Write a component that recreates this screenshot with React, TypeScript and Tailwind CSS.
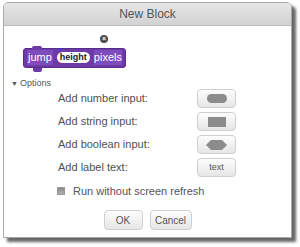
import React from "react";

const font = { fontFamily: '"Liberation Sans", Arial, sans-serif' };

function SmallBtn({ children }: { children: React.ReactNode }) {
  return (
    <div className="w-[39px] h-[19px] rounded-[4px] border border-[#cfcfcf] bg-gradient-to-b from-[#fdfdfd] to-[#e6e6e6] flex items-center justify-center">
      {children}
    </div>
  );
}

function Row({ label, children }: { label: string; children: React.ReactNode }) {
  return (
    <div className="flex items-center h-[19px]">
      <div className="w-[193px] pl-[54px] text-[11px] text-[#505050] leading-none whitespace-nowrap">{label}</div>
      {children}
    </div>
  );
}

export default function App() {
  return (
    <div className="w-[300px] h-[247px] bg-white pt-[2px] pl-[3px]" style={font}>
      <div className="w-[289px] h-[236px] bg-white border border-[#a8a8a8] rounded-t-[5px] shadow-[4px_4px_3px_rgba(0,0,0,0.6)] flex flex-col">
        <div className="h-[23px] rounded-t-[4px] bg-gradient-to-b from-[#e6e6e6] to-[#d2d2d2] border-b border-[#bdbdbd] text-center text-[12px] leading-[22px] text-[#555]">
          New Block
        </div>
        <div className="pl-[19px] pt-[18px] h-[44px]">
          <div className="relative inline-flex items-center h-[20px] bg-[#6d3aa8] rounded-[3px] pl-[3px] pr-[3px] gap-[4px] border border-[#5a2d8c]">
            <div className="absolute left-[8px] top-[-3px] w-[10px] h-[3px] bg-[#6d3aa8] rounded-t-[2px]" />
            <div className="absolute left-[9px] bottom-[-5px] w-[9px] h-[4px] bg-[#6d3aa8] rounded-b-[2px]" />
            <div className="absolute left-[76px] top-[-14px] w-[8px] h-[8px] rounded-full bg-[#4a4a4a] flex items-center justify-center text-white text-[7px] leading-none font-bold">×</div>
            <div className="h-[15px] px-[1px] bg-[#7d4dbd] text-white text-[11px] leading-[15px]">jump</div>
            <div className="h-[11px] px-[3px] rounded-full bg-white text-[#222] text-[9px] font-bold leading-[11px]">height</div>
            <div className="h-[15px] bg-[#7d4dbd] text-white text-[11px] leading-[15px]">pixels</div>
          </div>
        </div>
        <div className="pl-[7px] pt-[13px] flex items-center text-[9px] text-[#555] leading-none h-[9px]">
          <span className="text-[7px] mr-[2px]">▼</span>Options
        </div>
        <div className="mt-[6px] flex flex-col gap-[4px]">
          <Row label="Add number input:">
            <SmallBtn><div className="w-[20px] h-[9px] rounded-full bg-[#8c8c8c]" /></SmallBtn>
          </Row>
          <Row label="Add string input:">
            <SmallBtn><div className="w-[18px] h-[10px] bg-[#8c8c8c]" /></SmallBtn>
          </Row>
          <Row label="Add boolean input:">
            <SmallBtn>
              <svg width="21" height="10" viewBox="0 0 21 10"><polygon points="0,5 5,0 16,0 21,5 16,10 5,10" fill="#8c8c8c" /></svg>
            </SmallBtn>
          </Row>
          <Row label="Add label text:">
            <SmallBtn><span className="text-[9px] text-[#555]">text</span></SmallBtn>
          </Row>
        </div>
        <div className="mt-[9px] pl-[53px] flex items-center h-[10px]">
          <div className="w-[8px] h-[8px] bg-gradient-to-b from-[#8a8a8a] to-[#b0b0b0] border border-[#999]" />
          <span className="ml-[8px] text-[11px] text-[#555] leading-none">Run without screen refresh</span>
        </div>
        <div className="mt-[14px] flex justify-center gap-[7px]">
          <div className="w-[39px] h-[20px] rounded-[4px] border border-[#cfcfcf] bg-gradient-to-b from-[#fdfdfd] to-[#e6e6e6] flex items-center justify-center text-[10px] text-[#555]">OK</div>
          <div className="w-[42px] h-[20px] rounded-[4px] border border-[#cfcfcf] bg-gradient-to-b from-[#fdfdfd] to-[#e6e6e6] flex items-center justify-center text-[10px] text-[#555]">Cancel</div>
        </div>
      </div>
    </div>
  );
}
